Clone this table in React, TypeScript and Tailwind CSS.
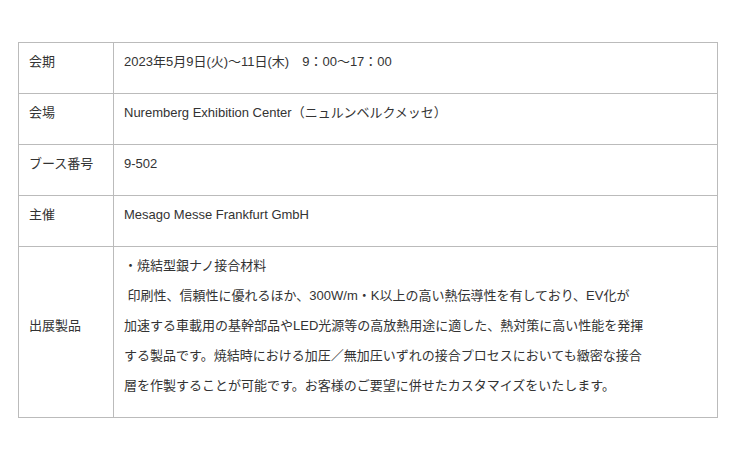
const rows: { label: string; lines: string[] }[] = [
  { label: "会期", lines: ["2023年5月9日(火)〜11日(木)　9：00〜17：00"] },
  { label: "会場", lines: ["Nuremberg Exhibition Center（ニュルンベルクメッセ）"] },
  { label: "ブース番号", lines: ["9-502"] },
  { label: "主催", lines: ["Mesago Messe Frankfurt GmbH"] },
  {
    label: "出展製品",
    lines: [
      "・焼結型銀ナノ接合材料",
      "\u00a0印刷性、信頼性に優れるほか、300W/m・K以上の高い熱伝導性を有しており、EV化が",
      "加速する車載用の基幹部品やLED光源等の高放熱用途に適した、熱対策に高い性能を発揮",
      "する製品です。焼結時における加圧／無加圧いずれの接合プロセスにおいても緻密な接合",
      "層を作製することが可能です。お客様のご要望に併せたカスタマイズをいたします。",
    ],
  },
];

export default function App() {
  return (
    <div className="w-[740px] h-[458px] bg-white pt-[42px] pl-[18px] font-['Liberation_Sans','Noto_Sans_CJK_JP',sans-serif] text-[13px] text-[#333]">
      <table className="w-[700px] border-collapse border border-[#bbb]">
        <tbody>
          {rows.map((r) => (
            <tr key={r.label} className="border-b border-[#bbb]">
              <td className="w-[95px] border-r border-[#bbb] pl-[10px] pt-[4px] pb-[16px] align-middle leading-[30px] whitespace-nowrap">
                {r.label}
              </td>
              <td className="pl-[10px] pt-[4px] pb-[16px] align-top leading-[30px] whitespace-nowrap">
                {r.lines.map((l, i) => (
                  <div key={i}>{l}</div>
                ))}
              </td>
            </tr>
          ))}
        </tbody>
      </table>
    </div>
  );
}
